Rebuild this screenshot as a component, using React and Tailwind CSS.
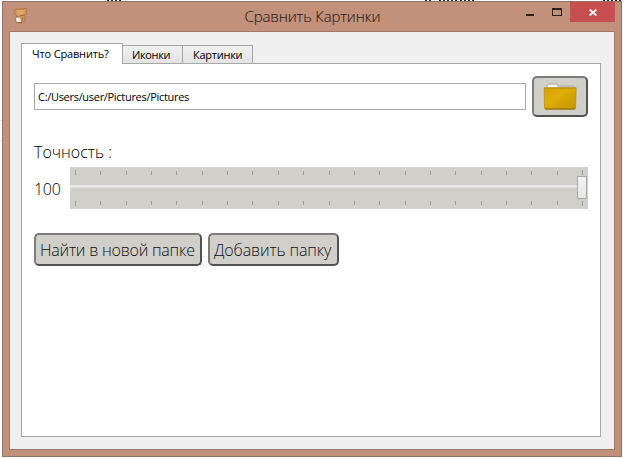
import React from "react";

const ticks = [75, 100, 126, 151, 176, 202, 227, 252, 278, 303, 329, 354, 379, 405, 430, 455, 481, 506, 531, 557, 582];

function BearIcon() {
  return (
    <svg width="14" height="17" viewBox="0 0 14 17" className="block">
      <path d="M.8 3 2 1.8 4 2.2 9.5 2 11 1.2 12.8 2.2 12.6 6.5 10.5 8.5 11.2 11 10.6 14.2 8 15.8H2.5L1.2 12 2.8 9 .8 7.2Z" fill="#cf9656" stroke="#a86f42" strokeWidth=".8" />
      <path d="M2.5 3h8v3.3l-3 2-4-1.3z" fill="#dba662" />
      <path d="M6 8.9 10.5 8M8.2 10.5V14" stroke="#8d5a36" strokeWidth=".8" />
      <path d="m1.8 10.7 3.7-.5 1.7 4.3-2.5 1-2.2-1.3z" fill="#f4f1ed" />
      <path d="M2.5 9.7 5.5 10M4 15.7h4" stroke="#7b5a43" strokeWidth=".8" />
    </svg>
  );
}

function FolderIcon() {
  return (
    <svg width="34" height="28" viewBox="0 0 34 28" className="block">
      <defs>
        <linearGradient id="folder" x1="0" y1="0" x2="1" y2="1">
          <stop offset="0" stopColor="#d5a000" />
          <stop offset=".4" stopColor="#e0ae0b" />
          <stop offset=".6" stopColor="#d5a303" />
          <stop offset="1" stopColor="#c89500" />
        </linearGradient>
      </defs>
      <path d="M4 6V2.5L5 1h9.5L16 3h15l1 1.5V7H3z" fill="#c9c5b4" stroke="#aaa797" strokeWidth=".7" />
      <path d="M4.8 4.5V1.8h9.4v2.7z" fill="#f7f7f4" />
      <path d="M1.2 4.8h32l-.7 20.4-1 1H2.5l-1-1z" fill="url(#folder)" stroke="#b38a0e" strokeWidth=".7" />
      <path d="M2 26h29.7" stroke="#8d6b08" strokeWidth="1" />
      <path d="M1.5 5.3h31" stroke="#bf9415" strokeWidth=".8" />
    </svg>
  );
}

function TickRow({ first }) {
  return (
    <svg width="518" height="6" className="block" shapeRendering="crispEdges">
      {ticks.map((x, i) => {
        const edge = i === 0 || i === ticks.length - 1;
        const y = first && !edge ? 1 : 0;
        return <rect key={x} x={x - 70} y={y} width="1" height={edge ? 5 : 4} fill="#9d9d98" />;
      })}
    </svg>
  );
}

const bevel = "rounded-[5px] border-2 border-t-[#7c7c7a] border-l-[#7c7c7a] border-r-[#525252] border-b-[#525252] bg-[#d0cfca]";

export default function App() {
  return (
    <div className="relative h-[458px] w-[623px] overflow-hidden bg-white pt-px pl-[2px] font-['Open_Sans','Noto_Sans',sans-serif] text-black">
      <svg width="623" height="1" className="absolute top-0 left-0">
        <path d="M107 .5h15M425 .5h8M439 .5h18M460 .5h15M603 .5h19" stroke="#222" strokeDasharray="2 2" />
      </svg>
      <div className="absolute top-[120px] left-0 h-[21px] w-[2px] border-y border-[#dedede]" />

      <div className="flex h-[456px] w-[620px] flex-col border border-[#957164] bg-[#c2917b] px-[6px] pb-[6px]">
        <header className="flex h-[29px] shrink-0">
          <div className="w-[236px] pt-[5px] pl-[5px]"><BearIcon /></div>
          <h1 className="w-[275px] pt-[3px] text-[15px] leading-[22px] font-light whitespace-nowrap text-[#2b1d17]">
            <span className="inline-block tracking-[-0.14px] [-webkit-text-stroke:0.1px_#2b1d17]">Сравнить Картинки</span>
          </h1>
          <div className="flex w-[51px] pt-[6px] pl-[6px]">
            <svg width="40" height="9" shapeRendering="crispEdges">
              <path d="M1 6h8v2H1z" fill="#2d211c" />
              <path d="M27 0h10v8H27zM28 2v5h8V2z" fillRule="evenodd" fill="#2d211c" />
            </svg>
          </div>
          <div className="flex h-[20px] w-[45px] shrink-0 items-center justify-center bg-[#c84f50] pl-px">
            <svg width="8" height="7" viewBox="0 0 8 7"><path d="m.7.5 6.6 6M7.3.5.7 6.5" stroke="white" strokeWidth="1.8" /></svg>
          </div>
        </header>

        <main className="flex h-[419px] w-[606px] flex-col border border-[#a17867] bg-[#efefef] pt-[11px] pl-[11px]">
          <nav className="flex h-[20px] items-end text-[11px] leading-[14px] whitespace-nowrap">
            <div className="z-10 -mb-px h-[21px] w-[102px] border border-b-0 border-[#a7a7a7] bg-white pt-[3px] pl-[10px]"><span className="inline-block tracking-[-0.16px]">Что Сравнить?</span></div>
            <div className="-ml-px h-[18px] w-[61px] border border-b-0 border-[#a7a7a7] bg-linear-to-b from-[#f0f0f0] to-[#e4e4e4] pt-[2px] pl-[9px]"><span className="inline-block tracking-[-0.35px]">Иконки</span></div>
            <div className="-ml-px h-[18px] w-[71px] border border-b-0 border-[#a7a7a7] bg-linear-to-b from-[#f0f0f0] to-[#e4e4e4] pt-[2px] pl-[10px]"><span className="inline-block tracking-[-0.25px]">Картинки</span></div>
          </nav>

          <section className="h-[374px] w-[580px] border border-[#a7a7a7] bg-white pt-[12px] pl-[12px]">
            <div className="flex h-[41px] items-center gap-[6px]">
              <div className="h-[27px] w-[492px] border border-[#a7a7a7] pt-[5px] pl-[3px] text-[11px] leading-[16px]"><span className="inline-block tracking-[-0.3px]">C:/Users/user/Pictures/Pictures</span></div>
              <button className={`flex h-[41px] w-[56px] items-center justify-center ${bevel}`}><FolderIcon /></button>
            </div>
            <div className="mt-[25px] h-[25px] text-[16px] leading-[21px] font-light whitespace-nowrap"><span className="inline-block">Точность :</span></div>
            <div className="flex h-[42px]">
              <div className="w-[36px] pt-[11px] text-[16px] leading-[22px] font-light"><span className="inline-block tracking-[-0.3px]">100</span></div>
              <div className="relative flex h-[42px] w-[518px] flex-col bg-[#d0cfca] pt-[3px]">
                <TickRow first />
                <div className="mt-[9px] h-[3px] w-[514px] border-b border-[#dededb] bg-[#e8e8e7]" />
                <div className="mt-[13px]"><TickRow /></div>
                <div className="absolute top-[9px] left-[507px] h-[23px] w-[10px] border border-[#a9a9a9] bg-linear-to-b from-[#f3f3f3] to-[#e6e6e6]" />
              </div>
            </div>
            <div className="mt-[24px] flex gap-[6px] text-[16px] leading-[22px] font-light whitespace-nowrap text-[#111]">
              <button className={`h-[33px] w-[168px] pl-[4px] text-left ${bevel}`}><span className="inline-block tracking-[-0.22px]">Найти в новой папке</span></button>
              <button className={`h-[33px] w-[131px] pl-[4px] text-left ${bevel}`}><span className="inline-block tracking-[-0.12px]">Добавить папку</span></button>
            </div>
          </section>
        </main>
      </div>
    </div>
  );
}
